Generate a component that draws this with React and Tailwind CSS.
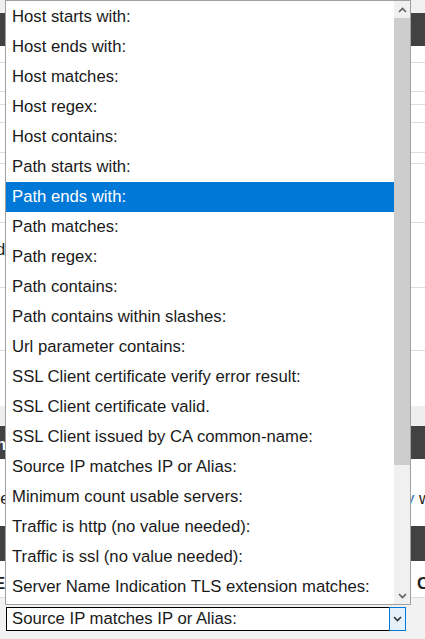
import React from "react"

const options = [
  "Host starts with:",
  "Host ends with:",
  "Host matches:",
  "Host regex:",
  "Host contains:",
  "Path starts with:",
  "Path ends with:",
  "Path matches:",
  "Path regex:",
  "Path contains:",
  "Path contains within slashes:",
  "Url parameter contains:",
  "SSL Client certificate verify error result:",
  "SSL Client certificate valid.",
  "SSL Client issued by CA common-name:",
  "Source IP matches IP or Alias:",
  "Minimum count usable servers:",
  "Traffic is http (no value needed):",
  "Traffic is ssl (no value needed):",
  "Server Name Indication TLS extension matches:",
]

const Chevron = ({ up, className }) => (
  <svg width="9" height="6" viewBox="0 0 9 6" className={className}>
    <polyline
      points={up ? "1,5 4.5,1.5 8,5" : "1,1 4.5,4.5 8,1"}
      fill="none"
      stroke="currentColor"
      strokeWidth="1.6"
    />
  </svg>
)

const App = () => {
  const selected = "Path ends with:"

  return (
    <div
      className="relative w-[425px] h-[639px] overflow-hidden bg-[#f2f2f2] text-[16.7px] text-[#1a1a1a]"
      style={{ fontFamily: '"Liberation Sans", Arial, sans-serif' }}
    >
      {/* page behind the open list */}
      <div className="flex flex-col">
        <div className="h-[13px] bg-[#f0f0f0]" />
        <div className="h-[33px] bg-[#424242]" />
        <div className="bg-white">
          <div className="h-[17px] border-b border-[#dddddd]" />
          <div className="h-[29px] border-b border-[#dddddd]" />
          <div className="h-[13px] border-b border-[#dddddd]" />
          <div className="h-[18px] border-b border-[#dddddd]" />
          <div className="h-[30px] border-b border-[#dddddd]" />
          <div className="h-[11px] border-b border-[#dddddd]" />
          <div className="h-[59px] border-b border-[#dddddd]" />
          <div className="h-[65px] border-b border-[#dddddd] pt-[18px] leading-[18px]">
            <span className="-ml-[4px] text-[#222]">d</span>
          </div>
          <div className="h-[63px] border-b border-[#dddddd]" />
          <div className="h-[55px]" />
        </div>
        <div className="h-[20px] bg-[#eeeeee]" />
        <div className="h-[33px] bg-[#424242] pt-[6px] font-bold text-white">
          <span className="-ml-[4px]">n</span>
        </div>
        <div className="h-[67px] bg-white flex items-center justify-between pt-[12px]">
          <span className="-ml-[9px] text-[#222]">pe</span>
          <span className="mr-[-6px]">
            <span className="text-[#2f6db5]">y</span> w
          </span>
        </div>
        <div className="h-[35px] bg-[#424242]" />
        <div className="h-[37px] bg-white border-b border-[#dddddd] flex items-center justify-between pt-[10px] font-bold text-[#222]">
          <span className="-ml-[6px]">E</span>
          <span className="mr-[-4px]">C</span>
        </div>
        <div className="h-[9px]" />
        <div className="ml-[6px] w-[400px] h-[24px] border border-black bg-white flex">
          <div className="flex-1 pl-[5px] leading-[22px] truncate">
            Source IP matches IP or Alias:
          </div>
          <div className="w-[17px] -my-[1px] -mr-[1px] border border-[#0078d7] bg-[#e5f1fb] flex items-center justify-center text-[#333]">
            <Chevron />
          </div>
        </div>
      </div>

      {/* open dropdown list */}
      <div className="absolute left-[5px] top-0 w-[406px] h-[605px] border border-[#a0a0a0] bg-white flex">
        <div className="w-[388px] pt-[1px]">
          {options.map((opt) => (
            <div
              key={opt}
              className={`h-[30px] pl-[6px] leading-[30px] whitespace-nowrap ${
                opt === selected ? "bg-[#0078d7] text-white" : ""
              }`}
            >
              {opt}
            </div>
          ))}
        </div>
        <div className="w-[16px] flex flex-col bg-[#f0f0f0]">
          <div className="h-[17px] flex items-center justify-center text-[#606060]">
            <Chevron up />
          </div>
          <div className="h-[447px] bg-[#cdcdcd]" />
          <div className="flex-1" />
          <div className="h-[17px] flex items-center justify-center text-[#606060]">
            <Chevron />
          </div>
        </div>
      </div>
    </div>
  )
}

export default App
